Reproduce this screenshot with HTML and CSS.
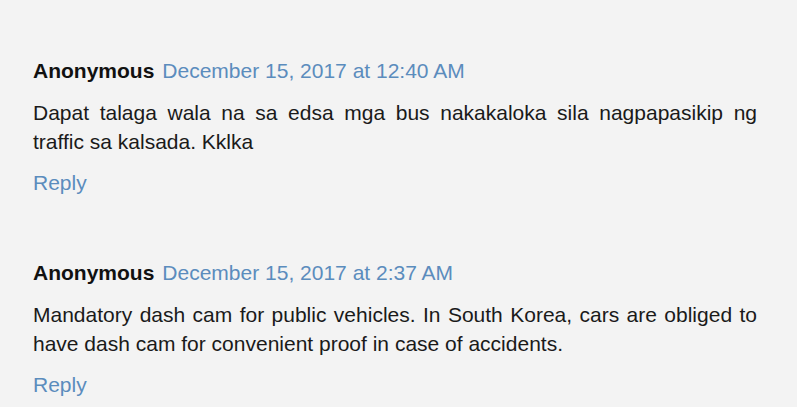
FILE: index.html
```html
<!DOCTYPE html>
<html>
<head>
<meta charset="utf-8">
<link rel="stylesheet" href="styles.css">
</head>
<body>
<div class="comments">
  <div class="comment">
    <div class="comment-header"><span class="author">Anonymous</span><a class="date" href="#">December 15, 2017 at 12:40 AM</a></div>
    <p class="comment-body">Dapat talaga wala na sa edsa mga bus nakakaloka sila nagpapasikip ng traffic sa kalsada. Kklka</p>
    <div class="comment-actions"><a class="reply" href="#">Reply</a></div>
  </div>
  <div class="comment">
    <div class="comment-header"><span class="author">Anonymous</span><a class="date" href="#">December 15, 2017 at 2:37 AM</a></div>
    <p class="comment-body">Mandatory dash cam for public vehicles. In South Korea, cars are obliged to have dash cam for convenient proof in case of accidents.</p>
    <div class="comment-actions"><a class="reply" href="#">Reply</a></div>
  </div>
</div>
</body>
</html>
```
FILE: styles.css
```css
html, body {
  margin: 0;
  padding: 0;
  background: #f3f3f3;
}
body {
  font-family: "Liberation Sans", Arial, sans-serif;
  font-size: 21px;
  line-height: 29px;
  color: #1a1a1a;
}
.comments {
  display: flex;
  flex-direction: column;
  gap: 61px;
  padding: 56px 40px 0 33px;
}
.comment-header {
  display: flex;
  align-items: baseline;
}
.author {
  font-weight: bold;
  color: #111;
  margin-right: 8px;
}
a {
  color: #5b8cbd;
  text-decoration: none;
}
.comment-body {
  margin: 13px 0 0 0;
  text-align: justify;
}
.comment-actions {
  margin-top: 12px;
}
```
